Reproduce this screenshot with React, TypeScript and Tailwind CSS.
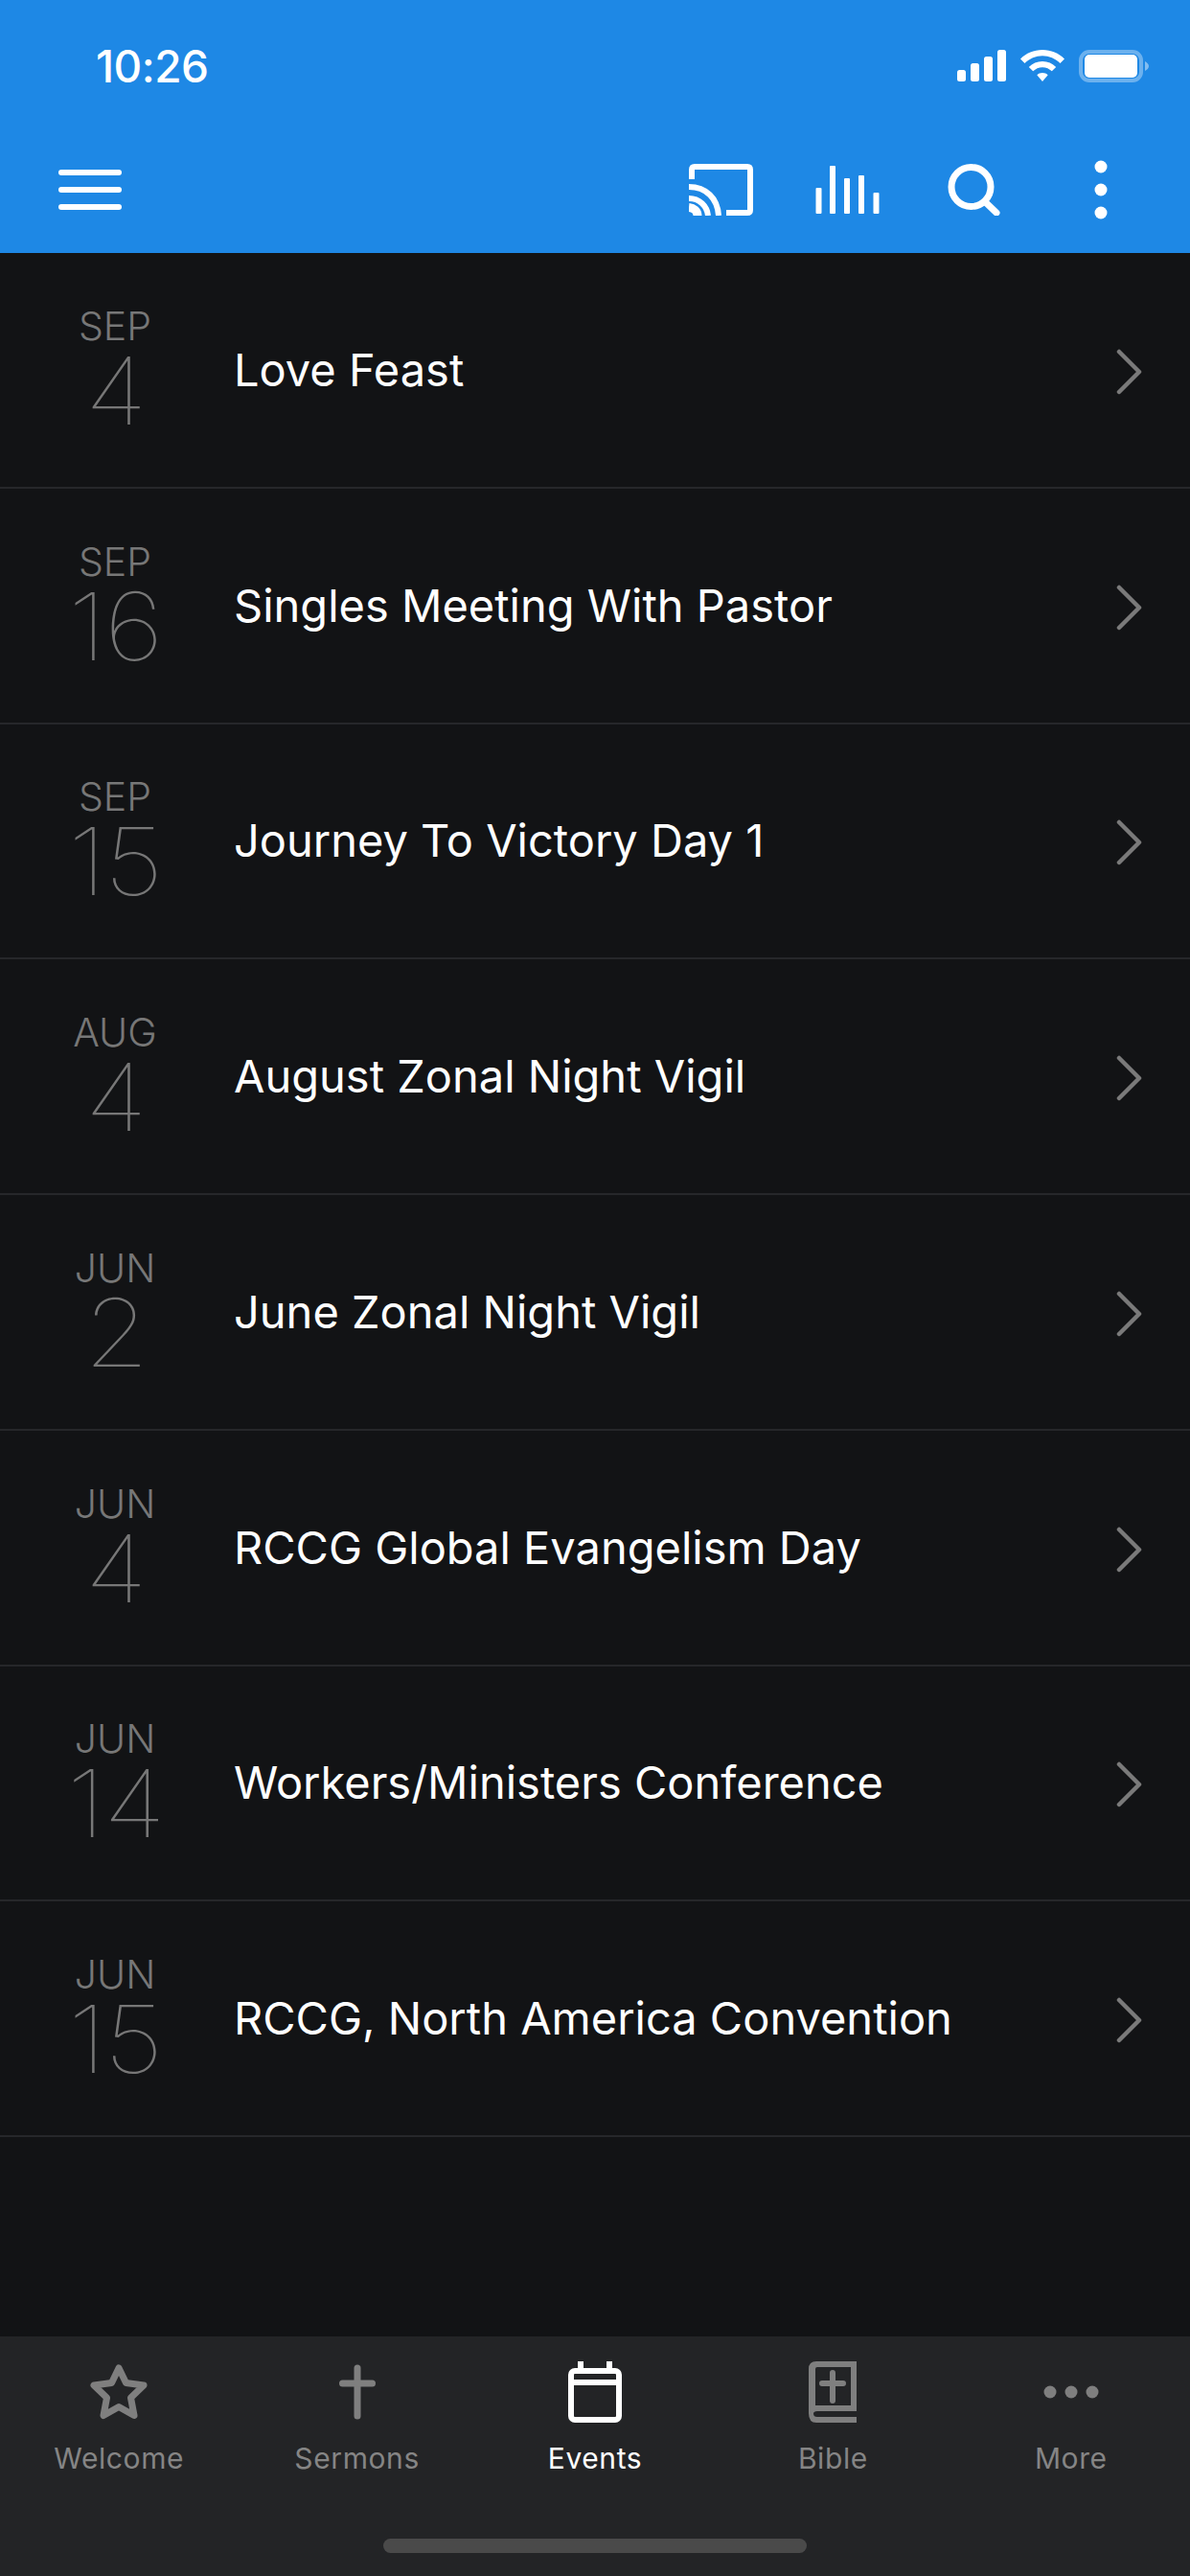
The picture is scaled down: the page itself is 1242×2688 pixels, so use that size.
const events = [
  { month: "SEP", day: "4", title: "Love Feast" },
  { month: "SEP", day: "16", title: "Singles Meeting With Pastor" },
  { month: "SEP", day: "15", title: "Journey To Victory Day 1" },
  { month: "AUG", day: "4", title: "August Zonal Night Vigil" },
  { month: "JUN", day: "2", title: "June Zonal Night Vigil" },
  { month: "JUN", day: "4", title: "RCCG Global Evangelism Day" },
  { month: "JUN", day: "14", title: "Workers/Ministers Conference" },
  { month: "JUN", day: "15", title: "RCCG, North America Convention" },
]

function StatusIcons() {
  return (
    <div className="flex items-center">
      <svg width="51" height="34" viewBox="0 0 51 34" fill="white">
        <rect x="0" y="21" width="9" height="12" rx="2.500" />
        <rect x="14" y="14" width="9" height="19" rx="2.500" />
        <rect x="28" y="7" width="9" height="26" rx="2.500" />
        <rect x="42" y="0" width="9" height="33" rx="2.500" />
      </svg>
      <svg width="46" height="34" viewBox="0 0 46 34" className="ml-[15px]" fill="white">
        <path d="M23 0C14 0 6 3.500 0 9.500L4.500 14C9.500 9.200 16 6.300 23 6.300S36.500 9.200 41.500 14L46 9.500C40 3.500 32 0 23 0Z" />
        <path d="M23 12C17.500 12 12.500 14.200 8.800 17.900L13.200 22.300C15.800 19.800 19.200 18.200 23 18.200S30.200 19.800 32.800 22.300L37.200 17.900C33.500 14.200 28.500 12 23 12Z" />
        <path d="M23 24C20.700 24 18.800 24.800 17.300 26.300L23 33L28.700 26.300C27.200 24.800 25.300 24 23 24Z" />
      </svg>
      <svg width="73" height="34" viewBox="0 0 73 34" className="ml-[15px]">
        <rect x="2" y="2" width="63" height="30" rx="9" fill="none" stroke="white" strokeOpacity="0.35" strokeWidth="4" />
        <rect x="6" y="5" width="55" height="24" rx="5" fill="white" />
        <path d="M69 12C71 13 73 15 73 17S71 21 69 22Z" fill="white" fillOpacity="0.45" />
      </svg>
    </div>
  )
}

function CastIcon() {
  return (
    <svg width="67" height="54" viewBox="0 0 67 54" fill="none" stroke="white" strokeWidth="6">
      <path d="M3 16V6Q3 3 6 3H61Q64 3 64 6V48Q64 51 61 51H39" />
      <path d="M0 24C18 24 30 36 31 54" />
      <path d="M0 36C11 36 19 44 20 54" />
      <path d="M0 45.500C5 46 9 49 9 54" strokeWidth="9" />
    </svg>
  )
}

function BarsIcon() {
  return (
    <svg width="67" height="50" viewBox="0 0 67 50" fill="white">
      <rect x="0.500" y="23" width="6" height="27" rx="1" />
      <rect x="15" y="0" width="6" height="50" rx="1" />
      <rect x="30" y="13" width="6" height="37" rx="1" />
      <rect x="45" y="10" width="6" height="40" rx="1" />
      <rect x="60.500" y="28" width="6" height="22" rx="1" />
    </svg>
  )
}

function SearchIcon() {
  return (
    <svg width="55" height="54" viewBox="0 0 55 54" fill="none" stroke="white" strokeWidth="7" strokeLinecap="round">
      <circle cx="24.500" cy="24" r="20.500" />
      <path d="M39.500 40L51 51" />
    </svg>
  )
}

function MoreVertical() {
  return (
    <svg width="14" height="62" viewBox="0 0 14 62" fill="white">
      <circle cx="7" cy="7" r="6.500" />
      <circle cx="7" cy="31" r="6.500" />
      <circle cx="7" cy="55" r="6.500" />
    </svg>
  )
}

function ChevronIcon() {
  return (
    <svg width="28" height="50" viewBox="0 0 28 50" fill="none" stroke="#7a7a7a" strokeWidth="4.500" strokeLinecap="round" strokeLinejoin="round" className="ml-auto mt-1 shrink-0">
      <path d="M4 4L25 25L4 46" />
    </svg>
  )
}

function StarIcon() {
  return (
    <svg width="60" height="58" viewBox="0 0 60 58" fill="none" stroke="#7f7f7f" strokeWidth="7" strokeLinejoin="round">
      <path d="M30 4L37.500 19.500L56 22L42.500 35L46 53.500L30 44.500L14 53.500L17.500 35L4 22L22.500 19.500Z" />
    </svg>
  )
}

function CrossIcon() {
  return (
    <svg width="38" height="58" viewBox="0 0 38 58" fill="none" stroke="#7f7f7f" strokeWidth="7" strokeLinecap="round">
      <path d="M19 4V54" />
      <path d="M3.500 20H34.500" />
    </svg>
  )
}

function CalendarIcon() {
  return (
    <svg width="56" height="64" viewBox="0 0 56 64" fill="none">
      <rect x="3" y="10" width="50" height="51" rx="4" stroke="white" strokeWidth="6" />
      <path d="M3 22H53" stroke="white" strokeWidth="6" />
      <rect x="10" y="0" width="6" height="10" fill="white" />
      <rect x="40" y="0" width="6" height="10" fill="white" />
    </svg>
  )
}

function BibleIcon() {
  return (
    <svg width="50" height="64" viewBox="0 0 50 64" fill="none">
      <path d="M50 0H8Q0 0 0 8V54Q0 64 8 64H50V58H9Q5 58 5 54.500Q5 52 9 52H50Z M44 6V46H7V8Q7 6 9 6Z" fill="#7f7f7f" fillRule="evenodd" />
      <path d="M25 12V41M14 23H36" stroke="#7f7f7f" strokeWidth="6" strokeLinecap="round" />
    </svg>
  )
}

function DotsIcon() {
  return (
    <svg width="58" height="14" viewBox="0 0 58 14" fill="#7f7f7f">
      <circle cx="7" cy="7" r="6.500" />
      <circle cx="29" cy="7" r="6.500" />
      <circle cx="51" cy="7" r="6.500" />
    </svg>
  )
}

const tabs = [
  { label: "Welcome", icon: <StarIcon /> },
  { label: "Sermons", icon: <CrossIcon /> },
  { label: "Events", icon: <CalendarIcon />, active: true },
  { label: "Bible", icon: <BibleIcon /> },
  { label: "More", icon: <DotsIcon /> },
]

export default function App() {
  return (
    <div className="flex h-[2688px] w-[1242px] flex-col overflow-hidden bg-[#121315] font-['Inter',sans-serif]">
      {/* HEADER */}
      <header className="h-[264px] shrink-0 bg-[#1e88e5]">
        <div className="flex h-[138px] items-start justify-between pl-[100px] pr-[43px] pt-[52px]">
          <span className="text-[46px] font-medium leading-[34px] tracking-[-0.5px] text-white">10:26</span>
          <StatusIcons />
        </div>
        <div className="flex items-center pl-[61px] pr-[86px] pt-[29px]">
          <div className="flex w-[66px] flex-col gap-3">
            <div className="h-1.5 rounded-full bg-white" />
            <div className="h-1.5 rounded-full bg-white" />
            <div className="h-1.5 rounded-full bg-white" />
          </div>
          <div className="ml-auto flex items-center">
            <CastIcon />
            <div className="ml-[65px]">
              <BarsIcon />
            </div>
            <div className="ml-[71px]">
              <SearchIcon />
            </div>
            <div className="ml-[98px]">
              <MoreVertical />
            </div>
          </div>
        </div>
      </header>

      {/* EVENT LIST */}
      <main className="flex-1">
        {events.map((event) => (
          <div
            key={event.title + event.day}
            className="flex h-[245.75px] items-center border-b-2 border-[#26272a] pr-[50px]"
          >
            <div className="flex w-[240px] shrink-0 flex-col items-center pb-[1px] text-[#777777]">
              <span className="text-[41px] font-light leading-[40px]">{event.month}</span>
              <span className="mt-[5px] scale-x-[1.12] text-[98px] font-thin leading-[86px] tracking-[-2px]">{event.day}</span>
            </div>
            <span className="ml-[4px] text-[47px] font-normal leading-[56px] text-white">{event.title}</span>
            <ChevronIcon />
          </div>
        ))}
      </main>

      {/* TAB BAR */}
      <nav className="relative h-[250px] shrink-0 bg-[#232426]">
        <div className="grid grid-cols-5">
          {tabs.map((tab) => (
            <div key={tab.label} className="flex flex-col items-center">
              <div className="mt-[26px] flex h-[64px] items-center justify-center">{tab.icon}</div>
              <span
                className={`mt-[19px] text-[30px] leading-[36px] tracking-[0.6px] ${tab.active ? "text-white" : "text-[#858585]"}`}
              >
                {tab.label}
              </span>
            </div>
          ))}
        </div>
        <div className="absolute bottom-[24px] left-[400px] h-[15px] w-[442px] rounded-full bg-[#4a4a4a]" />
      </nav>
    </div>
  )
}
